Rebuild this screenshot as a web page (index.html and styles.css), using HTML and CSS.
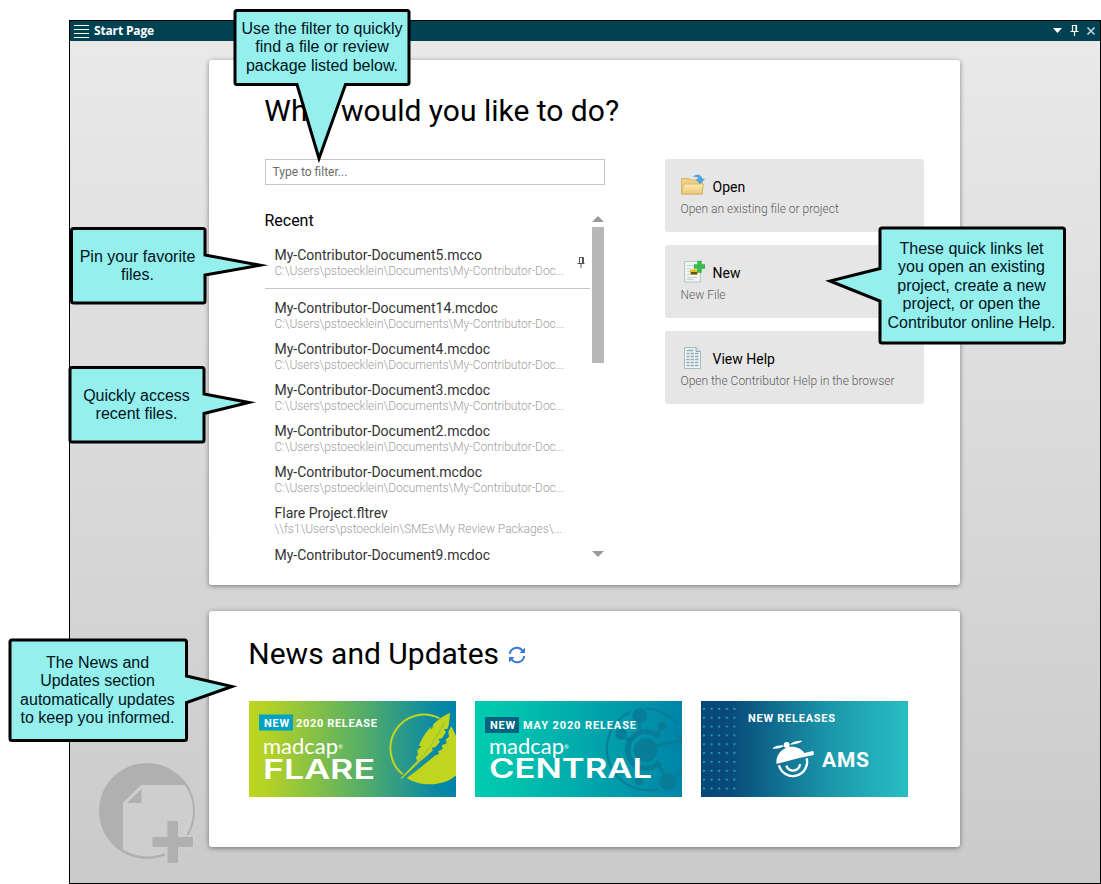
FILE: index.html
```html
<!DOCTYPE html>
<html lang="en">
<head>
<meta charset="utf-8">
<title>Start Page</title>
<link rel="stylesheet" href="styles.css">
</head>
<body>
<div class="stage">
<main class="window">
  <header class="titlebar">
    <span class="menu"><i></i><i></i><i></i><i></i></span>
    <span class="title">Start Page</span>
    <svg class="controls" width="48" height="20" viewBox="0 0 48 20">
      <path d="M1 7h9l-4.500 5z" fill="#fff"/>
      <path d="M20.500 10V4.500h4V10M24 4.500V10M18.500 10.500h8M22.500 11v4" fill="none" stroke="#fff" stroke-width="1.200"/>
      <path d="M35.500 6.500l7 7M42.500 6.500l-7 7" stroke="#c3d4d8" stroke-width="1.600"/>
    </svg>
  </header>
  <div class="content">
    <section class="card start">
      <h1>What would you like to do?</h1>
      <div class="columns">
        <div class="files">
          <div class="filter">Type to filter...</div>
          <h2>Recent</h2>
          <div class="listwrap">
            <div class="list">
              <div class="item pinned">
                <div><p class="name">My-Contributor-Document5.mcco</p><p class="path">C:\Users\pstoecklein\Documents\My-Contributor-Doc...</p></div>
                <svg width="9" height="12" viewBox="0 0 9 12"><path d="M2.500 6V.5h4V6M5.500 .5V6M.5 6.500h7M4 7v4" fill="none" stroke="#555"/></svg>
              </div>
              <div class="item"><p class="name">My-Contributor-Document14.mcdoc</p><p class="path">C:\Users\pstoecklein\Documents\My-Contributor-Doc...</p></div>
              <div class="item"><p class="name">My-Contributor-Document4.mcdoc</p><p class="path">C:\Users\pstoecklein\Documents\My-Contributor-Doc...</p></div>
              <div class="item"><p class="name">My-Contributor-Document3.mcdoc</p><p class="path">C:\Users\pstoecklein\Documents\My-Contributor-Doc...</p></div>
              <div class="item"><p class="name">My-Contributor-Document2.mcdoc</p><p class="path">C:\Users\pstoecklein\Documents\My-Contributor-Doc...</p></div>
              <div class="item"><p class="name">My-Contributor-Document.mcdoc</p><p class="path">C:\Users\pstoecklein\Documents\My-Contributor-Doc...</p></div>
              <div class="item"><p class="name">Flare Project.fltrev</p><p class="path">\\fs1\Users\pstoecklein\SMEs\My Review Packages\...</p></div>
              <div class="item"><p class="name">My-Contributor-Document9.mcdoc</p></div>
            </div>
            <div class="scroll"><b class="up"></b><b class="thumb"></b><b class="down"></b></div>
          </div>
        </div>
        <nav class="links">
          <div class="link">
            <div class="linkhead">
              <svg width="25" height="24" viewBox="0 0 25 24">
                <defs><linearGradient id="fold" x2="0" y2="1"><stop stop-color="#fdeab0"/><stop offset="1" stop-color="#edc778"/></linearGradient></defs>
                <path d="M1.500 20V4.500h8l1 1.500h12v14z" fill="#efcf86" stroke="#d3ae5c" stroke-width=".8"/>
                <path d="M3.500 10H23.500L22 20H1.500z" fill="url(#fold)" stroke="#d3ae5c" stroke-width=".8"/>
                <path d="M13.500 2.500C16 0 22 .5 22 5H24.500l-4.500 5-4-4.500h2.500C18.500 3 16.500 2 13.500 2.500z" fill="#4ba6e4" stroke="#3b8ccc" stroke-width=".4"/>
              </svg><span>Open</span>
            </div><p>Open an existing file or project</p>
          </div>
          <div class="link">
            <div class="linkhead">
              <svg width="25" height="24" viewBox="0 0 25 24">
                <path d="M4.500 1.500h16v20.500h-16z" fill="#eef4f4" stroke="#b3c6c8"/>
                <path d="M7 5.500h6M7 8.500h3M7 11.500h3M7 14.500h3M7 17.500h10M7 19.500h6" stroke="#c3d0d4"/>
                <path d="M10 9.500h8v5h-8z" fill="#e3bf1d"/><path d="M11 12h6v2.500h-6z" fill="#6c4f16"/>
                <path d="M17.500 1h4v3.500h3.500v4h-3.500v4h-4V8.500H14v-4h3.500z" fill="#36bd4c" stroke="#2ba441" stroke-width=".4"/>
              </svg><span>New</span>
            </div><p>New File</p>
          </div>
          <div class="link">
            <div class="linkhead">
              <svg width="25" height="24" viewBox="0 0 25 24">
                <path d="M4.500 1.500h11.500l4.500 4V22.500h-16z" fill="#ecf4f4" stroke="#a6bcbf"/>
                <path d="M16 1.500v4h4.500" fill="#d5e2e3" stroke="#8ca6aa"/>
                <path d="M6.500 4.500h7M6.500 7.500h3M10.500 7.500h3.500M15 7.500h3.500M6.500 10.500h3M10.500 10.500h3.500M15 10.500h3.500M6.500 13.500h3M10.500 13.500h3.500M15 13.500h3.500M6.500 16.500h3M10.500 16.500h3.500M15 16.500h3.500M6.500 19.500h3M10.500 19.500h3.500M15 19.500h3.500" stroke="#94abb2" stroke-width="1.300"/>
              </svg><span>View Help</span>
            </div><p>Open the Contributor Help in the browser</p>
          </div>
        </nav>
      </div>
    </section>
    <section class="card news">
      <h1>News and Updates
        <svg width="18" height="18" viewBox="0 0 18 18"><g fill="none" stroke="#3a7ad9" stroke-width="2"><path d="M1.800 8A7 7 0 0 1 14.500 4.800M16.200 10A7 7 0 0 1 3.500 13.200"/></g><path d="M17 1.500v5.500h-5.500zM1 16.500v-5.500h5.500z" fill="#3a7ad9"/></svg>
      </h1>
      <div class="banners">
        <svg width="207" height="96" viewBox="0 0 207 96">
          <defs><linearGradient id="flare"><stop stop-color="#bfd520"/><stop offset=".1" stop-color="#b2d127"/><stop offset=".55" stop-color="#55ae68"/><stop offset=".9" stop-color="#0989a5"/><stop offset="1" stop-color="#0084a8"/></linearGradient></defs>
          <path d="M0 0h207v96H0z" fill="url(#flare)"/>
          <path d="M10 13.500h34v16H10z" fill="#00a2c4"/>
          <g class="tag"><text x="15" y="26" textLength="25">NEW</text><text x="47" y="26" textLength="81">2020 RELEASE</text></g>
          <text class="brand" x="14" y="52.500" textLength="75" lengthAdjust="spacingAndGlyphs">madcap</text><text class="reg" x="89" y="48">®</text>
          <text class="product" x="14" y="77.800" textLength="112" lengthAdjust="spacingAndGlyphs">FLARE</text>
          <g transform="scale(.33333) translate(-15 -18)">
            <path d="M476 238A101 101 0 0 1 586 70" fill="none" stroke="#bfd520" stroke-width="6"/>
            <path d="M488 249C520 226 545 205 572 182L585 177 582 169 596 162 593 151 608 145 605 134 615 125 613 110 622 94 640 130V238C600 276 530 276 488 249z" fill="#bfd520"/>
            <path d="M468 252L519 198 516 186 522 180 520 166 533 154 525 152C533 130 548 108 561 96L563 105 568 88C584 72 600 61 618 53C617 74 615 88 611 101L600 103 606 111 594 130 583 132 588 140 574 157 563 158 567 166 548 183 527 201 475 250z" fill="#bfd520"/>
            <path d="M511 213Q566 152 602 82" fill="none" stroke="#61aa72" stroke-width="1.500"/>
          </g>
        </svg>
        <svg width="207" height="96" viewBox="0 0 207 96">
          <defs><linearGradient id="central"><stop stop-color="#00ccaf"/><stop offset=".2" stop-color="#02c1ae"/><stop offset="1" stop-color="#0084a8"/></linearGradient></defs>
          <path d="M0 0h207v96H0z" fill="url(#central)"/>
          <g transform="scale(.33333) translate(-15 -18)">
            <g fill="none" stroke="#087d98" stroke-width="6">
              <path d="M527 41A124 124 0 0 1 625 91M483 49A124 124 0 0 0 565 282M618 247Q630 232 636 217"/>
              <path d="M567 126A55 55 0 1 0 570 201" stroke-width="16"/>
              <path d="M509 70V112M572 100l-19 26M459 123l22 16M560 152l76-17M560 197l27 50M507 215v36" stroke-width="8"/>
            </g>
            <g fill="#087d98"><circle cx="527" cy="165" r="36"/><circle cx="509" cy="62" r="22"/><circle cx="577" cy="93" r="13"/><circle cx="453" cy="117" r="17"/><circle cx="637" cy="133" r="17"/><circle cx="593" cy="261" r="25"/><circle cx="507" cy="258" r="13"/></g>
          </g>
          <path d="M10 16h34v16H10z" fill="#006480"/>
          <g class="tag"><text x="15" y="28" textLength="25">NEW</text><text x="48" y="28" textLength="113">MAY 2020 RELEASE</text></g>
          <text class="brand" x="14" y="52.500" textLength="75" lengthAdjust="spacingAndGlyphs">madcap</text><text class="reg" x="89" y="48">®</text>
          <text class="product" x="14" y="77" textLength="163" lengthAdjust="spacingAndGlyphs">CENTRAL</text>
        </svg>
        <svg width="207" height="96" viewBox="0 0 207 96">
          <defs><linearGradient id="ams"><stop stop-color="#064777"/><stop offset=".15" stop-color="#084c7b"/><stop offset=".65" stop-color="#1c9bad"/><stop offset="1" stop-color="#27bec4"/></linearGradient>
          <pattern id="dots" x="2" y="7" width="7.600" height="8.850" patternUnits="userSpaceOnUse"><path d="M0 0h2v1.600H0z" fill="#2ba7b5"/></pattern></defs>
          <path d="M0 0h207v96H0z" fill="url(#ams)"/><path d="M2 6h33v83H2z" fill="url(#dots)"/>
          <g class="tag"><text x="47" y="21" textLength="87">NEW RELEASES</text></g>
          <g transform="scale(.33333) translate(-15 -18)">
            <g fill="none" stroke="#fff" stroke-width="7"><path d="M249 211A42 42 0 0 0 332 190"/><path d="M271 212A21 21 0 0 0 312 207"/></g>
            <path d="M242 207C237 178 262 154 291 155C306 156 319 164 325 174L351 168Q355 170 353 180L306 190z" fill="#fff"/>
            <circle cx="272" cy="150" r="9" fill="#fff"/><path d="M262 151C246 151 235 154 229 161Q246 163 262 155zM283 147C294 139 308 136 319 138Q307 148 283 149z" fill="#fff"/>
          </g>
          <text class="ams" x="121" y="66" textLength="47">AMS</text>
        </svg>
      </div>
    </section>
  </div>
  <svg class="watermark" width="98" height="102" viewBox="0 0 98 102">
    <defs><clipPath id="disc"><circle cx="48.500" cy="48" r="45.500"/></clipPath></defs>
    <circle cx="48" cy="48" r="48" fill="#b0b0b0"/>
    <path d="M42 22H98V97H24V40z" fill="#cecece" clip-path="url(#disc)"/>
    <path d="M42.500 26V40H28z" fill="#b0b0b0"/>
    <path d="M67 57h11l8 15h10v15H80v13H66V88H51V72h16z" fill="#cdcdcd"/>
    <path d="M68.500 58H79V74h15v10H79v16H68.500V84H53.500V74h15z" fill="#b0b0b0"/>
  </svg>
</main>
<svg class="bubbles" width="1101" height="884" viewBox="0 0 1101 884">
  <path d="M237 10.500H407q2 0 2 2V82.500q0 2-2 2H345.500L319 158.500 297 84.500H237q-2 0-2-2V12.500q0-2 2-2z"/>
  <path d="M73.500 228.500H203q2 0 2 2V255L260 265.200 205 275V301q0 2-2 2H73.500q-2 0-2-2V230.500q0-2 2-2z"/>
  <path d="M72 367.500H202q2 0 2 2V394L249 402.500 204 413.500V440q0 2-2 2H72q-2 0-2-2V369.500q0-2 2-2z"/>
  <path d="M882 228H1062.500q2 0 2 2V341q0 2-2 2H882q-2 0-2-2V301L830 281 880 268.500V230q0-2 2-2z"/>
  <path d="M12 640H184.500q2 0 2 2V676L232 686.500 186.500 702.500V738.500q0 2-2 2H12q-2 0-2-2V642q0-2 2-2z"/>
</svg>
<p class="callout c-filter">Use the filter to quickly<br>find a file or review<br>package listed below.</p>
<p class="callout c-pin">Pin your favorite<br>files.</p>
<p class="callout c-recent">Quickly access<br>recent files.</p>
<p class="callout c-links">These quick links let<br>you open an existing<br>project, create a new<br>project, or open the<br>Contributor online Help.</p>
<p class="callout c-news">The News and<br>Updates section<br>automatically updates<br>to keep you informed.</p>
</div>
</body>
</html>
```
FILE: styles.css
```css
* { box-sizing: border-box; margin: 0; padding: 0; }
body { background: #fff; font-family: Roboto, sans-serif; overflow: hidden; }
svg { display: block; flex: none; }
.stage { position: relative; width: 1101px; height: 884px; padding: 20px 0 0 69px; }
.window { position: relative; height: 864px; border: 1px solid #000; background: linear-gradient(#eaeaea, #cacaca); }
.titlebar { height: 20px; background: #004252; display: flex; align-items: center; padding: 0 0 0 4px; color: #fff; }
.menu { display: flex; flex-direction: column; gap: 3px; width: 15px; }
.menu i { height: 1px; background: #fff; }
.title { font: bold 12px/18px "Open Sans", sans-serif; letter-spacing: -.15px; margin: -1px 0 0 5px; flex: 1; white-space: nowrap; }
.content { width: 751px; margin: 19px 0 0 139px; display: flex; flex-direction: column; gap: 26px; }
.card { background: #fff; border-radius: 3px; box-shadow: 0 1px 5px rgba(0,0,0,.45); }
h1 { font-size: 30px; font-weight: 400; line-height: 36px; color: #000; white-space: nowrap; text-indent: -.7px; }
.start { height: 525px; padding: 33px 36px 0 56px; }
.columns { display: flex; gap: 60px; margin-top: 30px; }
.files { width: 340px; }
.filter { height: 26px; border: 1px solid #c6c6c6; padding-left: 6.500px; font-size: 12px; line-height: 24px; color: #6c6c6c; }
h2 { font-size: 16px; font-weight: 400; line-height: 20px; margin-top: 26px; text-indent: -.6px; }
.listwrap { display: flex; justify-content: space-between; margin-top: -16px; }
.list { width: 325px; padding-top: 31px; height: 348px; overflow: hidden; }
.item { padding-left: 9.500px; height: 41.100px; }
.pinned { display: flex; justify-content: space-between; height: 43px; padding-right: 4px; border-bottom: 1px solid #c6c6c6; margin-bottom: 10px; }
.pinned svg { margin-top: 11px; }
.name { font-size: 14px; line-height: 18px; color: #333; white-space: nowrap; }
.path { font-size: 12px; font-weight: 300; line-height: 14px; letter-spacing: -.04px; color: #a0a0a0; white-space: nowrap; }
.scroll { width: 12px; margin-right: 1px; padding-top: 1px; display: flex; flex-direction: column; align-items: center; }
.up { border: 6px solid transparent; border-top: 0; border-bottom-color: #999; }
.thumb { width: 12px; height: 136px; background: #b8b8b8; margin-top: 5px; }
.down { border: 6px solid transparent; border-bottom: 0; border-top-color: #999; margin-top: 188px; }
.links { width: 259px; display: flex; flex-direction: column; gap: 13px; }
.link { height: 73px; background: #e6e6e6; border-radius: 3px; padding: 15px 15px 0; }
.linkhead { display: flex; gap: 7.500px; height: 24px; font-size: 14px; line-height: 26px; }
.link p { font-size: 12px; font-weight: 300; line-height: 16px; color: #606060; margin: 3px 0 0 .5px; white-space: nowrap; }
.news { height: 236px; padding: 25px 40px 0; }
.news h1 { display: flex; align-items: center; gap: 8.500px; }
.news h1 svg { margin-top: 2px; }
.banners { display: flex; gap: 19px; margin-top: 29px; }
.banners text { fill: #fff; }
.tag { font: bold 11px Roboto, sans-serif; }
.brand { font: 20.500px Lato, sans-serif; }
.reg { font: 6px Lato, sans-serif; }
.product { font: 600 26.500px Inter, sans-serif; }
.ams { font: bold 21px Roboto, sans-serif; }
.watermark { position: absolute; left: 29px; top: 742px; }
.bubbles { position: absolute; left: 0; top: 0; fill: #95efec; stroke: #000; stroke-width: 3; stroke-miterlimit: 12; }
.callout { position: absolute; font: 16px/18.400px "Liberation Sans", Arial, sans-serif; color: #00131c; text-align: center; white-space: nowrap; }
.c-filter { left: 235px; top: 20px; width: 174px; }
.c-pin { left: 70.500px; top: 248px; width: 134px; }
.c-recent { left: 69.500px; top: 387px; width: 134px; }
.c-links { left: 879.500px; top: 240px; width: 184px; }
.c-news { left: 9.500px; top: 654px; width: 176px; }
```
